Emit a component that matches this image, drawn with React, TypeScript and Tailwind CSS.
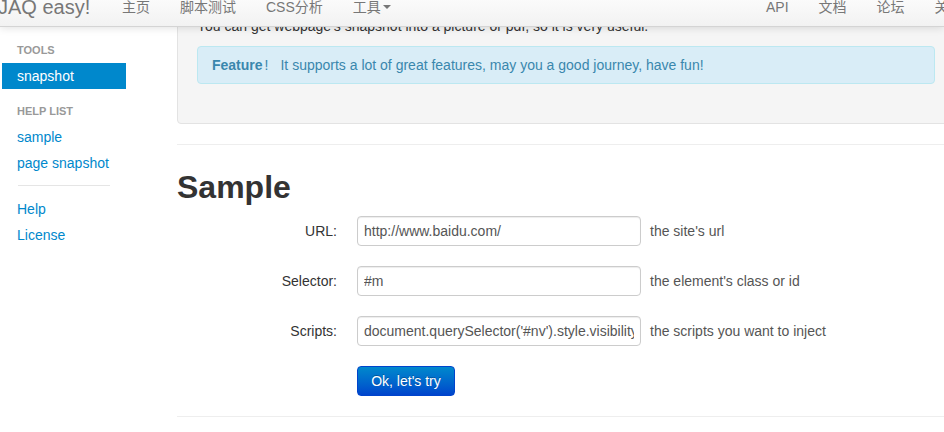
import React from 'react';

const font = "font-['Liberation_Sans','Noto_Sans_CJK_SC',sans-serif]";

const NavLink: React.FC<{ label: string; caret?: boolean }> = ({ label, caret }) => (
  <a className="flex items-center px-[15px] pt-[10px] pb-[10px] text-[14px] leading-[20px] text-[#777] whitespace-nowrap">
    {label}
    {caret && (
      <span className="ml-[2px] mt-[1px] inline-block w-0 h-0 border-t-[4px] border-t-[#777] border-x-[4px] border-x-transparent" />
    )}
  </a>
);

const Navbar: React.FC = () => (
  <div className="absolute left-0 top-[-13px] w-[944px] h-[40px] z-10 overflow-hidden bg-gradient-to-b from-white to-[#f2f2f2] border-b border-[#d4d4d4] shadow-[0_1px_8px_rgba(0,0,0,0.12)]">
    <div className="flex h-full">
      <div className="flex w-[751px] shrink-0">
        <a className="w-[109px] shrink-0 -ml-[2px] pt-[10px] text-[20px] leading-[20px] text-[#777] font-light whitespace-nowrap">
          JAQ easy!
        </a>
        <NavLink label="主页" />
        <NavLink label="脚本测试" />
        <NavLink label="CSS分析" />
        <NavLink label="工具" caret />
      </div>
      <div className="flex shrink-0">
        <NavLink label="API" />
        <NavLink label="文档" />
        <NavLink label="论坛" />
        <NavLink label="关于" />
      </div>
    </div>
  </div>
);

const Header: React.FC<{ label: string; first?: boolean }> = ({ label, first }) => (
  <li
    className={`px-[15px] py-[3px] text-[11px] leading-[20px] font-bold uppercase text-[#999] ${
      first ? '' : 'mt-[9px]'
    }`}
  >
    {label}
  </li>
);

const Item: React.FC<{ label: string; active?: boolean }> = ({ label, active }) => (
  <li>
    <a
      className={`block px-[15px] py-[3px] text-[14px] leading-[20px] ${
        active ? 'bg-[#0088cc] text-white' : 'text-[#0088cc]'
      }`}
    >
      {label}
    </a>
  </li>
);

const Sidebar: React.FC = () => (
  <div className="w-[177px] shrink-0 pt-[37px] pl-[2px]">
    <ul className="w-[124px]">
      <Header label="Tools" first />
      <Item label="snapshot" active />
      <Header label="Help list" />
      <Item label="sample" />
      <Item label="page snapshot" />
      <li className="ml-[16px] w-[92px] mt-[9px] mb-[10px] h-px bg-[#e5e5e5]" />
      <Item label="Help" />
      <Item label="License" />
    </ul>
  </div>
);

const Row: React.FC<{ label: string; value: string; help: string }> = ({ label, value, help }) => (
  <div className="flex items-center mb-[20px]">
    <label className="w-[160px] text-right text-[14px] leading-[20px] text-[#333]">{label}</label>
    <input
      readOnly
      defaultValue={value}
      className="ml-[20px] w-[284px] h-[30px] px-[6px] rounded-[4px] border border-[#ccc] bg-white text-[14px] text-[#555] shadow-[inset_0_1px_1px_rgba(0,0,0,0.075)] outline-none"
    />
    <span className="ml-[9px] text-[14px] leading-[20px] text-[#555]">{help}</span>
  </div>
);

const App: React.FC = () => (
  <div className={`relative w-[944px] h-[432px] overflow-hidden bg-white ${font}`}>
    <Navbar />
    <div className="flex">
      <Sidebar />
      <div className="w-[778px] shrink-0">
        <div className="-mt-[4px] bg-[#f5f5f5] border border-[#e3e3e3] rounded-[4px] p-[19px] text-[14px] leading-[20px] text-[#333]">
          <p className="mb-[10px]">You can get webpage's snapshot into a picture or pdf, so it is very useful.</p>
          <div className="mb-[20px] bg-[#d9edf7] border border-[#bce8f1] rounded-[4px] py-[8px] pl-[14px] text-[#3a87ad]">
            <strong>Feature</strong>
            <span className="ml-[2px]">!</span>
            <span className="ml-[12px]">It supports a lot of great features, may you a good journey, have fun!</span>
          </div>
        </div>
        <div className="mt-[20px] h-px bg-[#eee]" />
        <h1 className="mt-[24px] mb-[10px] text-[32px] leading-[36px] font-bold text-[#333]">Sample</h1>
        <form className="mt-[11px]">
          <Row label="URL:" value="http://www.baidu.com/" help="the site's url" />
          <Row label="Selector:" value="#m" help="the element's class or id" />
          <Row
            label="Scripts:"
            value="document.querySelector('#nv').style.visibility='hidden';"
            help="the scripts you want to inject"
          />
          <div className="ml-[180px]">
            <button
              type="button"
              className="h-[30px] w-[98px] rounded-[4px] border border-[#0044cc] bg-gradient-to-b from-[#0088cc] to-[#0044cc] text-[14px] text-white [text-shadow:0_-1px_0_rgba(0,0,0,0.25)]"
            >
              Ok, let's try
            </button>
          </div>
        </form>
        <div className="mt-[20px] h-px bg-[#eee]" />
      </div>
    </div>
  </div>
);

export default App;
